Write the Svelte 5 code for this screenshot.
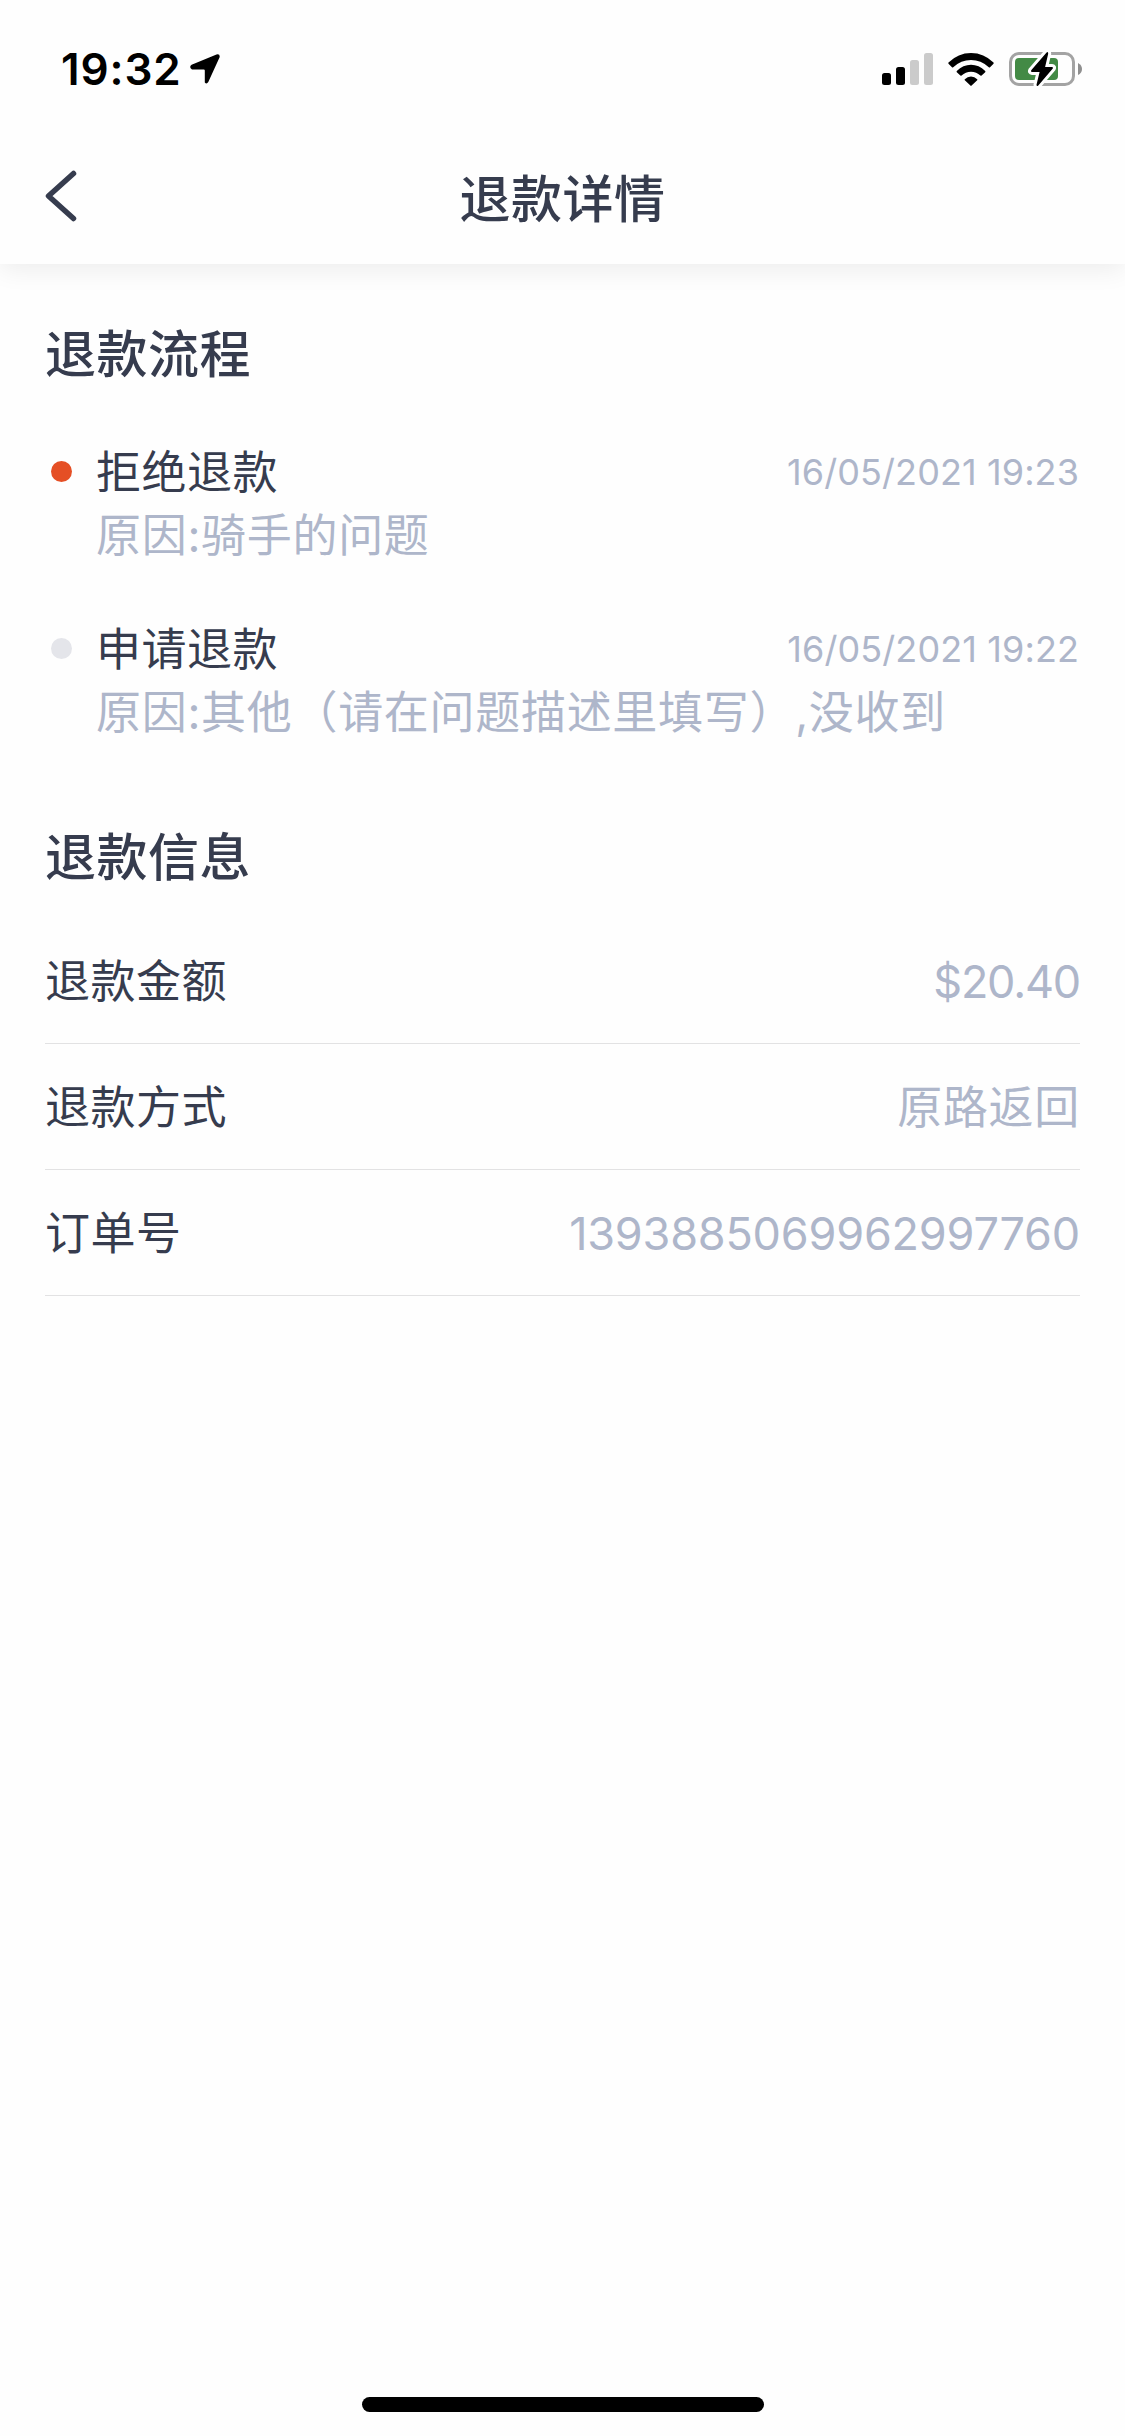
<script>
    let title = "退款详情";

    let steps = [
        { name: "拒绝退款", time: "16/05/2021 19:23", reason: "原因:骑手的问题", active: true },
        { name: "申请退款", time: "16/05/2021 19:22", reason: "原因:其他（请在问题描述里填写）,没收到", active: false },
    ];

    let info = [
        { label: "退款金额", value: "$20.40", type: "amount" },
        { label: "退款方式", value: "原路返回", type: "method" },
        { label: "订单号", value: "1393885069962997760", type: "order" },
    ];
</script>

<main>
    <div class="status-bar">
        <div class="clock">
            <span class="time">19:32</span>
            <svg class="location" viewBox="0 0 30 30">
                <path d="M1.6 10.8 26.5 .5Q30.2 -.3 29.6 3.2L18.3 28Q16.6 30.6 14.8 28.4V16.4Q14.8 15.4 13.8 15.4H2Q-1.4 13.2 1.6 10.8Z" />
            </svg>
        </div>
        <div class="indicators">
            <svg class="signal" viewBox="0 0 51 32">
                <rect x="0" y="20" width="9" height="12" rx="2.5" />
                <rect x="14" y="14" width="9" height="18" rx="2.5" />
                <rect x="28" y="7" width="9" height="25" rx="2.5" fill="#cbcbcb" />
                <rect x="42" y="0" width="9" height="32" rx="2.5" fill="#cbcbcb" />
            </svg>
            <svg class="wifi" viewBox="0 0 46 33">
                <path d="M.5 9.6Q10 0 23 0T45.5 9.6Q46 10.2 45.5 10.8L42 14.3Q41.4 14.8 40.8 14.3Q33 7.1 23 7.1T5.2 14.3Q4.6 14.8 4 14.3L.5 10.8Q0 10.2 .5 9.6Z" />
                <path d="M8.8 18Q15 11.8 23 11.8T37.2 18Q37.7 18.6 37.2 19.2L33.6 22.6Q33 23.1 32.4 22.6Q28.5 18.8 23 18.8T13.6 22.6Q13 23.1 12.4 22.6L8.8 19.2Q8.3 18.6 8.8 18Z" />
                <path d="M16.8 26.2Q19.5 23.5 23 23.5T29.2 26.2Q29.6 26.7 29.2 27.2L23.6 32.6Q23 33.2 22.4 32.6L16.8 27.2Q16.4 26.7 16.8 26.2Z" />
            </svg>
            <svg class="battery" viewBox="0 0 73 38">
                <rect x="1.5" y="3.5" width="63" height="31" rx="8.5" fill="none" stroke="#a3a3a3" stroke-width="3" />
                <path d="M69 13Q73 15 73 19T69 25Z" fill="#8f8f8f" />
                <rect x="6" y="8" width="43" height="22" rx="4" fill="#438a45" />
                <path class="bolt" d="M37.6 2.5 22.2 20.3Q21.4 22 23 22H30.6L27.5 34.7Q27.6 37 29.3 35.5L43.8 18.5Q44.6 17 43 17H36.1L39.2 3.8Q39.2 1.2 37.6 2.5Z" />
            </svg>
        </div>
    </div>

    <header>
        <button aria-label="返回">
            <svg viewBox="0 0 36 54">
                <path d="M30.5 4.5 5.5 27 30.5 49.5" />
            </svg>
        </button>
        <h1>{title}</h1>
    </header>

    <section class="process">
        <h2>退款流程</h2>
        {#each steps as step}
            <div class="step">
                <span class="dot" class:active={step.active}></span>
                <div class="step-body">
                    <div class="step-head">
                        <span>{step.name}</span>
                        <time>{step.time}</time>
                    </div>
                    <p>{step.reason}</p>
                </div>
            </div>
        {/each}
    </section>

    <section class="info">
        <h2>退款信息</h2>
        {#each info as row}
            <div class="row">
                <span>{row.label}</span>
                <span class="value {row.type}">{row.value}</span>
            </div>
        {/each}
    </section>

    <div class="home-indicator"></div>
</main>

<style>
    :global(body) {
        background: #fff;
    }

    main {
        display: flex;
        flex-direction: column;
        box-sizing: border-box;
        width: 1125px;
        height: 2436px;
        background: #fefefe;
        color: #363c4e;
        font-family: Inter, "Noto Sans CJK SC", sans-serif;
        font-size: 45px;
    }

    .status-bar {
        display: flex;
        justify-content: space-between;
        box-sizing: border-box;
        height: 132px;
        padding: 39px 43px 0 61px;
        color: #000;
    }

    .clock,
    .indicators {
        display: flex;
        align-items: center;
        height: 60px;
    }

    .time {
        width: 129px;
        font-size: 44px;
        font-weight: 600;
        line-height: 60px;
        letter-spacing: 0.9px;
    }

    .location {
        width: 30px;
        height: 30px;
    }

    .signal {
        width: 51px;
        height: 32px;
        margin-right: 15px;
    }

    .wifi {
        width: 46px;
        height: 33px;
        margin-right: 15px;
    }

    .battery {
        width: 73px;
        height: 38px;
    }

    .bolt {
        fill: #000;
        stroke: #fff;
        stroke-width: 6px;
        paint-order: stroke;
    }

    header {
        display: grid;
        grid-template-columns: 120px 1fr 120px;
        align-items: center;
        height: 132px;
        box-shadow: 0 6px 24px rgba(0, 0, 0, 0.07);
        /* keep the shadow below the bar only */
        clip-path: inset(0 0 -40px 0);
    }

    button {
        display: flex;
        margin: 0 0 4px 43px;
        padding: 0;
        border: none;
        background: none;
    }

    button svg {
        width: 36px;
        height: 54px;
        fill: none;
        stroke: #363c4e;
        stroke-width: 5.5px;
        stroke-linecap: round;
        stroke-linejoin: round;
    }

    h1,
    h2 {
        margin: 0;
        font-size: 51px;
        font-weight: 500;
        line-height: 72px;
        letter-spacing: 0.5px;
    }

    h1 {
        padding-top: 3px;
        text-align: center;
    }

    section {
        padding: 0 45px;
    }

    .process {
        padding-top: 55px;
    }

    .process h2 {
        margin-bottom: 50px;
    }

    .step {
        display: flex;
        margin-bottom: 51px;
    }

    .dot {
        flex: none;
        width: 21px;
        height: 21px;
        margin: 20px 24px 0 6px;
        border-radius: 50%;
        background: #e4e5ea;
    }

    .dot.active {
        background: #e54f25;
    }

    .step-body {
        flex: 1;
    }

    .step-head {
        display: flex;
        justify-content: space-between;
        line-height: 63px;
        letter-spacing: 0.5px;
    }

    time {
        margin-right: 1px;
        color: #aeb6ca;
        font-size: 36px;
        letter-spacing: 0.1px;
    }

    p {
        margin: 0;
        color: #aeb6ca;
        line-height: 63px;
        letter-spacing: 0.7px;
    }

    .info {
        padding-top: 27px;
    }

    .info h2 {
        margin-bottom: 24px;
    }

    .row {
        display: flex;
        justify-content: space-between;
        box-sizing: border-box;
        height: 126px;
        border-bottom: 1px solid #e2e2e3;
        line-height: 127px;
        letter-spacing: 0.5px;
    }

    .value {
        color: #aeb6ca;
    }

    .amount {
        letter-spacing: -1.2px;
    }

    .method {
        letter-spacing: 0.7px;
    }

    .order {
        letter-spacing: -0.2px;
    }

    .home-indicator {
        width: 402px;
        height: 15px;
        margin: auto auto 24px;
        border-radius: 8px;
        background: #000;
    }
</style>
